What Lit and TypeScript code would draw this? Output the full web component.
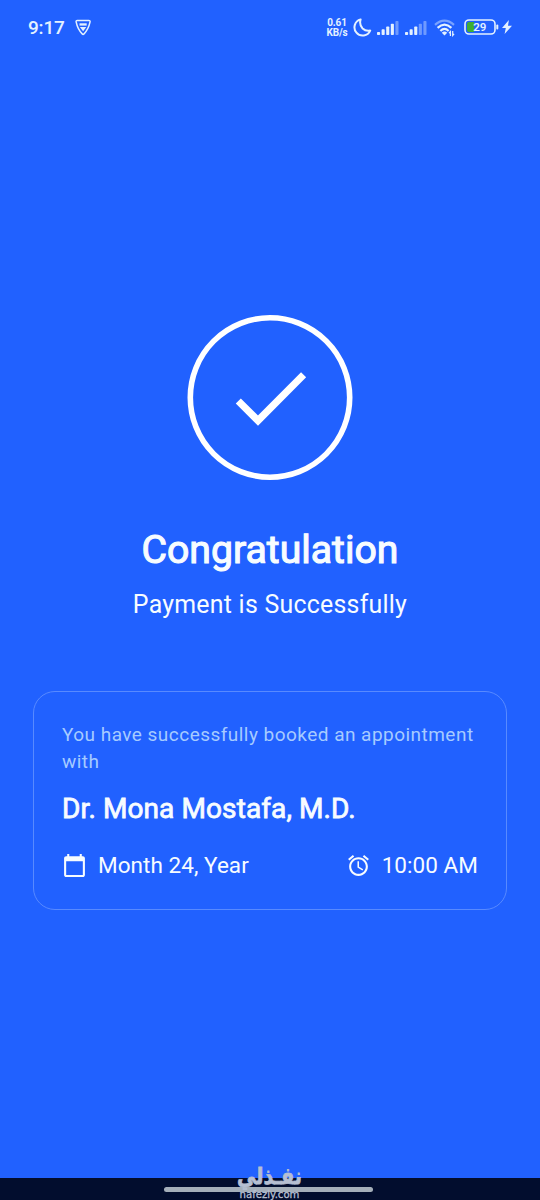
import { LitElement, html, css, svg } from "lit";
import { customElement } from "lit/decorators.js";

const bars = (full: number) => svg`
  ${[0, 1, 2, 3, 4].map(
    (i) => svg`<rect x=${i * 4.6} y=${11 - i * 2.75} width="3.1" height=${3 + i * 2.75} rx=".8"
      fill="#e4f1ff" opacity=${i < full ? 1 : 0.4}></rect>`
  )}`;

@customElement("status-bar")
export class StatusBar extends LitElement {
  static styles = css`
    :host {
      display: flex;
      align-items: center;
      height: 54px;
      padding: 0 28px;
      box-sizing: border-box;
      color: #e4f1ff;
    }
    svg { display: block; flex: none; }
    .time { font-size: 19px; font-weight: 500; letter-spacing: -0.2px; width: 47px; line-height: 24px; padding-top: 1px; }
    .right { margin-left: auto; display: flex; align-items: center; }
    .speed { font-size: 10px; line-height: 9.5px; font-weight: 700; letter-spacing: -0.1px; text-align: center; width: 22px; margin-right: 5px; padding-top: 1px; white-space: nowrap; }
    .moon { margin-right: 5px; }
    .sig { margin: 1px 6px 0 0; }
    .wifi { margin: 2px 8px 0 1px; }
    .bolt { margin-left: 3px; }
    .pct { font-size: 11.5px; font-weight: 600; }
  `;
  render() {
    return html`
      <div class="time">9:17</div>
      <svg width="17" height="17" viewBox="0 0 17 17" fill="none" stroke="#e4f1ff">
        <path d="M2.4 1.5h11.4q1.7 0 1.2 1.6-1.5 7-6 11.8-.9.9-1.8 0Q2.6 10.1 1.2 3.1.7 1.5 2.4 1.500Z" stroke-width="1.5" />
        <path d="M4.500 4.300h7.200v2.300H4.500Z" fill="#e4f1ff" stroke="none" />
        <path d="M4.900 8h6.400L8.100 12.300Z" fill="#e4f1ff" stroke="none" />
      </svg>
      <div class="right">
        <div class="speed">0.61<br />KB/s</div>
        <svg class="moon" width="19" height="19" viewBox="0 0 19 19" fill="none" stroke="#e4f1ff" stroke-width="2" stroke-linejoin="round">
          <path d="M7.600 1.400A8.200 8.200 0 1 0 17.200 12.600Q12.600 13.400 9.600 10.500 6 6.800 7.600 1.400Z" />
        </svg>
        <svg class="sig" width="22" height="14" viewBox="0 0 22 14">${bars(4)}</svg>
        <svg class="sig" width="22" height="14" viewBox="0 0 22 14">${bars(3)}</svg>
        <svg class="wifi" width="22" height="18" viewBox="0 0 22 18" fill="none" stroke="#e4f1ff" stroke-width="2.200">
          <path d="M1 5.800Q10.500-2.400 20 5.800" opacity=".45" />
          <path d="M3.600 8.900Q10.500 2.500 17.400 8.900" />
          <path d="M6.400 12Q10.500 7.900 14.600 12" />
          <path d="M7.800 13.700Q10.500 11.400 13.200 13.700L10.500 16.400Z" fill="#e4f1ff" stroke="none" />
          <path d="M16.400 17v-4.500l-1.400 1.600M18.700 12v4.500l1.400-1.600" stroke-width="1.200" />
        </svg>
        <svg width="35" height="16" viewBox="0 0 35 16">
          <rect x="1" y="1" width="30" height="14" rx="4" fill="none" stroke="#e4f1ff" stroke-width="1.600" />
          <path d="M5 3h5v10H5q-2 0-2-2V5q0-2 2-2Z" fill="#3fae35" />
          <rect x="32.300" y="5.500" width="2" height="5" rx="1" fill="#e4f1ff" />
          <text class="pct" x="15.800" y="12.200" text-anchor="middle" fill="#e4f1ff">29</text>
        </svg>
        <svg class="bolt" width="10" height="14" viewBox="0 0 10 14"><path d="M6.900 0 0 8h3.800L2.600 14 10 5.800H6Z" fill="#e4f1ff" /></svg>
      </div>
    `;
  }
}

@customElement("booking-card")
export class BookingCard extends LitElement {
  static styles = css`
    :host {
      display: block;
      box-sizing: border-box;
      width: 474px;
      height: 219px;
      padding: 29px 28px 0;
      border: 1.4px solid #588aff;
      border-radius: 22px;
      color: #f7fcff;
    }
    .note { font-size: 19px; line-height: 27px; letter-spacing: 0.47px; color: #a6cbff; white-space: nowrap; }
    .name { font-size: 28px; line-height: 34px; -webkit-text-stroke: 0.8px #f7fcff; margin-top: 17px; letter-spacing: 0.1px; white-space: nowrap; }
    .row { display: flex; justify-content: space-between; margin-top: 25px; }
    .item { display: flex; align-items: center; font-size: 22.5px; line-height: 28px; letter-spacing: 0.05px; gap: 11px; white-space: nowrap; }
    svg { display: block; }
  `;
  render() {
    return html`
      <div class="note">You have successfully booked an appointment<br />with</div>
      <div class="name">Dr. Mona Mostafa, M.D.</div>
      <div class="row">
        <div class="item">
          <svg width="25" height="25" viewBox="0 0 24 24" fill="#f7fcff">
            <path d="M20 3h-1V1h-2v2H7V1H5v2H4c-1.100 0-2 .9-2 2v16c0 1.100.9 2 2 2h16c1.100 0 2-.9 2-2V5c0-1.100-.9-2-2-2zm0 18H4V8h16v13z" />
          </svg>
          <span>Month 24, Year</span>
        </div>
        <div class="item">
          <svg width="25" height="25" viewBox="0 0 24 24" fill="#f7fcff">
            <path d="M22 5.720l-4.600-3.860-1.290 1.530 4.600 3.860L22 5.720zM7.880 3.390L6.600 1.860 2 5.710l1.290 1.530 4.590-3.850zM12.500 8H11v6l4.750 2.850.75-1.230-4-2.370V8zM12 4c-4.970 0-9 4.030-9 9s4.020 9 9 9c4.970 0 9-4.030 9-9s-4.030-9-9-9zm0 16c-3.870 0-7-3.130-7-7s3.130-7 7-7 7 3.130 7 7-3.130 7-7 7z" />
          </svg>
          <span>10:00 AM</span>
        </div>
      </div>
    `;
  }
}

@customElement("app-root")
export class AppRoot extends LitElement {
  static styles = css`
    :host {
      display: flex;
      flex-direction: column;
      position: relative;
      width: 540px;
      height: 1200px;
      overflow: hidden;
      background: #2161ff;
      color: #f7fcff;
      font-family: Roboto, "Noto Sans", sans-serif;
    }
    main { flex: 1; display: flex; flex-direction: column; align-items: center; padding-top: 260px; }
    svg { display: block; }
    h1 { margin: 46px 0 0; font-size: 39.2px; line-height: 48px; font-weight: 400; -webkit-text-stroke: 1.1px #f7fcff; white-space: nowrap; }
    p { margin: 15px 0 0; font-size: 24.9px; line-height: 32px; letter-spacing: 0.25px; white-space: nowrap; }
    booking-card { margin-top: 70px; }
    .nav { height: 22px; flex: none; background: #020d2e; display: flex; justify-content: center; }
    .handle { width: 209px; height: 5px; margin: 9px 4px 0 0; border-radius: 3px; background: #a5afba; }
    .mark { position: absolute; left: 220px; top: 1160px; width: 100px; height: 40px; }
    .ar { font: 700 23px "DejaVu Sans", sans-serif; stroke: #b6bfd2; stroke-width: 0.8px; }
    .en { font: 500 10.5px "DejaVu Sans", sans-serif; stroke: #b6bfd2; stroke-width: 0.3px; }
  `;
  render() {
    return html`
      <status-bar></status-bar>
      <main>
        <svg width="166" height="166" viewBox="0 0 166 166" fill="none" stroke="#fff">
          <circle cx="83" cy="83.500" r="79.700" stroke-width="5.600" />
          <path d="M51.300 87 71 106.600 116.600 60.800" stroke-width="7.200" />
        </svg>
        <h1>Congratulation</h1>
        <p>Payment is Successfully</p>
        <booking-card></booking-card>
      </main>
      <div class="nav"><div class="handle"></div></div>
      <svg class="mark" viewBox="0 0 100 40" fill="#b6bfd2">
        <text class="ar" x="49.500" y="23.500" text-anchor="middle" direction="rtl" textLength="65" lengthAdjust="spacingAndGlyphs">نفـذلي</text>
        <text class="en" x="19.500" y="37.500" textLength="60" lengthAdjust="spacingAndGlyphs">nafezly.com</text>
      </svg>
    `;
  }
}
